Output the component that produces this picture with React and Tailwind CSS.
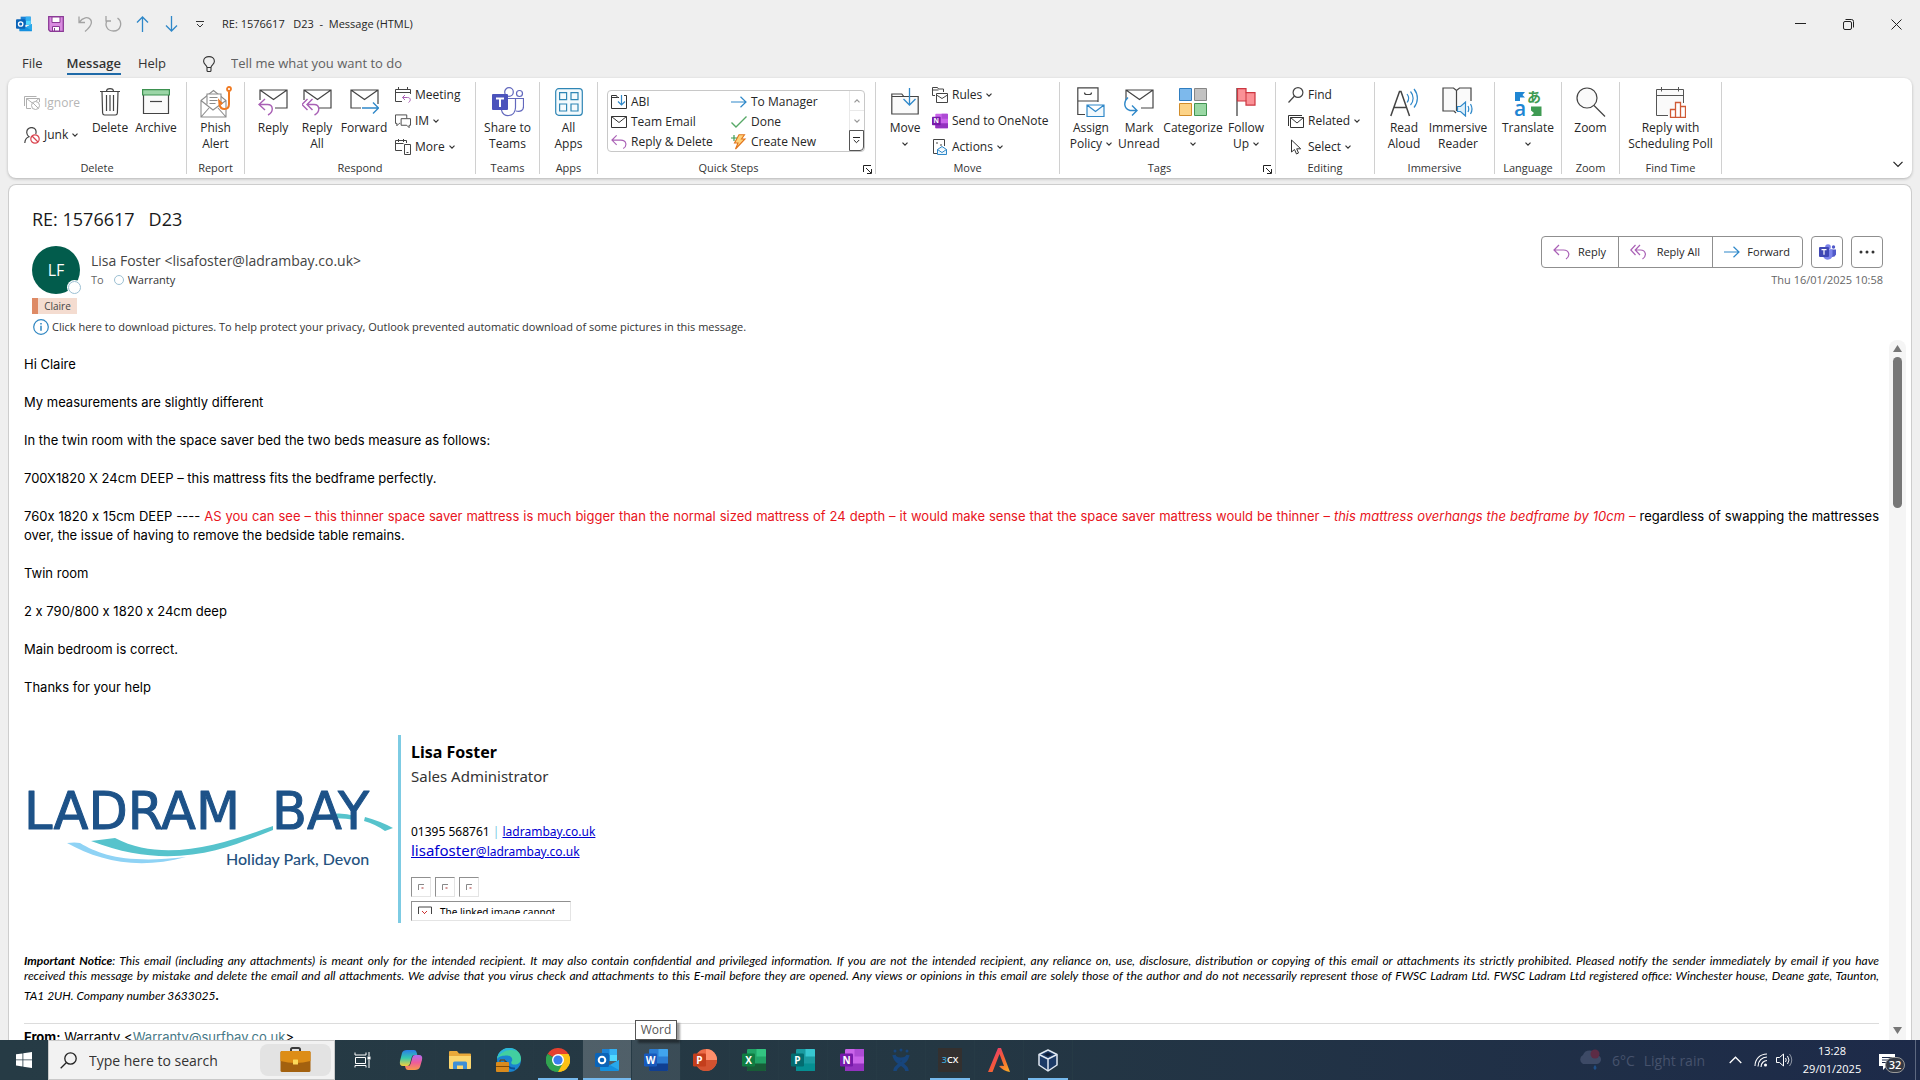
import React from 'react';

/* ---------- small shared pieces ---------- */

function Chevron() {
  return (
    <svg width="6" height="4" viewBox="0 0 6 4" className="inline-block shrink-0" fill="none" stroke="#333" strokeWidth="1.2">
      <path d="M.5 .6L3 3.1L5.5 .6" />
    </svg>
  );
}

function Group({ label, width, launcher, children }) {
  return (
    <section className={`relative my-1 flex h-[92px] shrink-0 flex-col justify-between border-r border-[#d0d0d0] ${width}`}>
      <div className="flex">{children}</div>
      <div className={`text-center text-[11px] leading-3 text-[#333] ${launcher ? 'pr-4' : ''}`}>{label}</div>
      {launcher && (
        <button aria-label={`${label} options`} className="absolute right-[3px] bottom-0">
          <svg width="9" height="9" viewBox="0 0 9 9" fill="none" stroke="#222">
            <path d="M.5 7V.5H8M3 3L8 8M8.5 4V8.5H4" />
          </svg>
        </button>
      )}
    </section>
  );
}

function BigButton({ icon, lines, width, arrow }) {
  return (
    <button className={`flex shrink-0 flex-col items-center pt-1 ${width}`}>
      <span className="flex h-8 items-center justify-center">{icon}</span>
      <span className="mt-0.5 text-center text-[12px] leading-4 whitespace-nowrap text-[#262626]">
        {lines.map((line, i) => (
          <span key={i} className="flex h-4 items-center justify-center gap-1">
            {line}
            {arrow && i === lines.length - 1 && <Chevron />}
          </span>
        ))}
      </span>
    </button>
  );
}

function SmallButton({ icon, label, arrow, disabled, height = 'h-[26px]' }) {
  return (
    <button
      disabled={disabled}
      className={`flex items-center gap-1 text-[12px] whitespace-nowrap ${height} ${disabled ? 'text-[#b5b5b5]' : 'text-[#262626]'}`}
    >
      <span className="flex w-4 justify-center">{icon}</span>
      {label}
      {arrow && <Chevron />}
    </button>
  );
}

/* ---------- icons ---------- */

function OutlookIcon({ size = 16 }) {
  return (
    <svg width={size} height={size} viewBox="0 0 24 24">
      <path d="M7 1h15v12H7z" fill="#1b83d8" />
      <path d="M14.500 1H22v6h-7.500z" fill="#35b1f2" />
      <path d="M14.500 7H22v6h-7.500z" fill="#50d9ff" />
      <path d="M7 7h7.500v6H7z" fill="#0a5fb4" />
      <path d="M5 12l10 5 9-5v10a1 1 0 0 1-1 1H6a1 1 0 0 1-1-1z" fill="#1490df" />
      <path d="M24 12v10l-9-5z" fill="#28a8ea" />
      <rect x="0" y="5" width="14" height="14" rx="1.500" fill="#0b64b8" />
      <circle cx="7" cy="12" r="3.300" fill="none" stroke="#fff" strokeWidth="2" />
    </svg>
  );
}

function SaveIcon() {
  return (
    <svg width="16" height="16" viewBox="0 0 16 16" stroke="#8b3a96" fill="#d98be0">
      <path d="M.7 .7h14.600v14.600H2.200L.7 13.800z" strokeWidth="1.300" />
      <path d="M4 1h8v5.500H4z" fill="#fff" />
      <path d="M4.500 15v-4.500h7V15z" fill="#fff" />
      <path d="M6.500 12v3" />
    </svg>
  );
}

function TrashIcon() {
  return (
    <svg width="22" height="28" viewBox="0 0 22 28" fill="none" stroke="#444" strokeWidth="1.200">
      <path d="M1 3.500h20M7.500 3.500C7.500 -.3 14.500 -.3 14.500 3.500M3 3.500l.6 21.500q.2 2 2 2h10.800q1.800 0 2-2L19 3.500M7.500 7v16M11 7v16M14.500 7v16" />
    </svg>
  );
}

function ArchiveIcon() {
  return (
    <svg width="28" height="26" viewBox="0 0 28 26">
      <path d="M1.500 6v18.500h25V6" fill="#fafafa" stroke="#444" strokeWidth="1.200" />
      <path d="M.6 .6h26.800v5.400H.6z" fill="#9bd5a6" stroke="#3d9150" strokeWidth="1.200" />
      <path d="M8 12.500h12" stroke="#444" strokeWidth="1.200" />
    </svg>
  );
}

function IgnoreIcon() {
  return (
    <svg width="16" height="14" viewBox="0 0 16 14" fill="none" stroke="#b0b0b0">
      <path d="M.5 10V.5h12M7 12.500H2.500v-10h13V6M2.500 2.500L9 7.500l6-5" />
      <circle cx="11.500" cy="9.500" r="4" fill="#fff" />
      <path d="M8.700 6.700l5.600 5.600" />
    </svg>
  );
}

function JunkIcon() {
  return (
    <svg width="16" height="17" viewBox="0 0 16 17" fill="none" stroke="#444">
      <path d="M.8 16C1 12 3 10.500 5 9.800C2.500 8 2 4 4 2c2-2 6-2 7.500.5c.7 1.500.8 3 .2 4.500" strokeWidth="1.200" />
      <circle cx="11" cy="12" r="4.200" fill="#fff" stroke="#d9434e" strokeWidth="1.200" />
      <path d="M8 9l6 6" stroke="#d9434e" strokeWidth="1.200" />
    </svg>
  );
}

function PhishIcon() {
  return (
    <svg width="32" height="32" viewBox="0 0 32 32" fill="none" stroke="#8c8c8c" strokeWidth="1.100">
      <path d="M1 14.500L13.500 4.500L26 14.500V31H1zM1 14.500L13 24L26 14.500M1 31l8-9M26 31l-8-9" />
      <path d="M7 18.500V8h14v10.500" fill="#fff" />
      <path d="M9.500 11.500h8M9.500 14.500h8M9.500 17.500h6" />
      <circle cx="29" cy="3" r="2" stroke="#f07a22" strokeWidth="1.800" />
      <path d="M29 5.500V18c0 6.500-8.500 6.500-9.500.5l-.3-3.500l3 3" stroke="#f07a22" strokeWidth="2" />
    </svg>
  );
}

function MailIcon({ kind }) {
  return (
    <svg width="30" height="28" viewBox="0 0 30 28" fill="none" stroke="#444" strokeWidth="1.200">
      <path d={kind === 'forward' ? 'M12 20H2V2h27v14M2 2l13.500 9.500L29 2' : 'M2 12V2h27v18H17M2 2l13.500 9.500L29 2'} />
      {kind === 'reply' && (
        <path d="M7 11L1 16.500L7 22M1 16.500h8.500c6 0 6.500 7.500.5 10.500" stroke="#a960b5" strokeWidth="1.400" />
      )}
      {kind === 'all' && (
        <path d="M5.500 11L0 16.500L5.500 22M10.500 11L5 16.500L10.500 22M5 16.500h7c6 0 6.500 7.500.5 10.500" stroke="#a960b5" strokeWidth="1.400" />
      )}
      {kind === 'forward' && (
        <path d="M13 20h16M24 14.500L29.500 20L24 25.500" stroke="#2f88c9" strokeWidth="1.400" />
      )}
      {kind === 'unread' && (
        <path d="M4 9.500C-1 14 0 21 6 22.500h6.500M8 17.500l5 5l-5 5" stroke="#2f88c9" strokeWidth="1.400" />
      )}
    </svg>
  );
}

function CurvedArrow({ double }) {
  return (
    <svg width="17" height="16" viewBox="0 0 17 16" fill="none" stroke="#a960b5" strokeWidth="1.200">
      {double ? (
        <path d="M5.500 1L.8 6L5.500 11M10 1L5.200 6L10 11M5.200 6h5.300c5.500 0 6.500 6 2 9" />
      ) : (
        <path d="M6 1L1 6L6 11M1 6h9.500c6 0 7 6 2.500 9" />
      )}
    </svg>
  );
}

function ArrowRight() {
  return (
    <svg width="16" height="12" viewBox="0 0 16 12" fill="none" stroke="#2f88c9" strokeWidth="1.200">
      <path d="M0 6h15M9.500 .8L15 6L9.500 11.200" />
    </svg>
  );
}

function MeetingIcon() {
  return (
    <svg width="16" height="16" viewBox="0 0 16 16" fill="none" stroke="#444">
      <path d="M7 14.500H.5v-12h15V7M.5 5.500h15M3.500 0v3M12.500 0v3" />
      <path d="M10 8L7.500 10.500L10 13M7.500 10.500h5c3.500 0 3.500 3.500 1 5" stroke="#a960b5" />
    </svg>
  );
}

function ImIcon() {
  return (
    <svg width="17" height="15" viewBox="0 0 17 15" fill="none" stroke="#444">
      <path d="M5.500 9.500h-1L2 12V9.500H.5v-9h12V4M6.500 4.500h10v7H15V14l-2.500-2.500h-6z" />
    </svg>
  );
}

function MoreIcon() {
  return (
    <svg width="16" height="16" viewBox="0 0 16 16" fill="none" stroke="#444">
      <path d="M7 11.500H.5v-10h11V4M.5 4.500h8M3.500 0v3M8.500 0v3M9.500 5.500h6v10h-6zM11.500 13.500h2" />
    </svg>
  );
}

function TeamsIcon() {
  return (
    <svg width="32" height="30" viewBox="0 0 32 30" fill="none" stroke="#6268bd" strokeWidth="1.200">
      <circle cx="17" cy="5" r="4.300" />
      <circle cx="27.500" cy="6.500" r="3" />
      <path d="M16 11.500h7.500v9c0 10-13 10.500-14 2.500M24 11.500h7.500v8c0 4-3 5.500-7.500 4.500" />
      <rect x="0" y="7" width="16" height="16" rx="1" fill="#4b53bc" stroke="none" />
      <path d="M4 11.500h8M8 11.500v8.500" stroke="#fff" strokeWidth="2" />
    </svg>
  );
}

function AppsIcon() {
  return (
    <svg width="28" height="28" viewBox="0 0 28 28" fill="#f4fafd" stroke="#2f86b5" strokeWidth="1.200">
      <rect x=".7" y=".7" width="26.600" height="26.600" rx="3" />
      <path d="M4.600 4.600h7v7h-7zM16 4.600h7v7h-7zM4.600 16h7v7h-7zM16 16h7v7h-7z" />
    </svg>
  );
}

function FolderArrow() {
  return (
    <svg width="28" height="28" viewBox="0 0 28 28" fill="none" stroke="#444" strokeWidth="1.200">
      <path d="M.8 6h10l2 2.500h14.400V26H.8zM.8 8.500h12" fill="#fafafa" />
      <path d="M18.500 0v17M12.500 11l6 6l6-6" stroke="#2f88c9" strokeWidth="1.300" />
    </svg>
  );
}

function SmallFolderArrow() {
  return (
    <svg width="16" height="14" viewBox="0 0 16 14" fill="none" stroke="#333">
      <path d="M8 2.500H6.500l-1-2H.5v13h15V.5H13M.5 2.500h6" />
      <path d="M10.500 0v9.500M7 6.500L10.500 10L14 6.500" stroke="#2f88c9" strokeWidth="1.200" />
    </svg>
  );
}

function SmallMail() {
  return (
    <svg width="16" height="12" viewBox="0 0 16 12" fill="none" stroke="#333">
      <path d="M.5 .5h15v11H.5zM.5 .5L8 6.500L15.500 .5" />
    </svg>
  );
}

function CheckIcon() {
  return (
    <svg width="16" height="12" viewBox="0 0 16 12" fill="none" stroke="#56a866" strokeWidth="1.400">
      <path d="M.5 6.500L5 11L15.500 .5" />
    </svg>
  );
}

function BoltIcon() {
  return (
    <svg width="16" height="16" viewBox="0 0 16 16" fill="none">
      <path d="M8 .7h5.500L10.500 5h3.500L4.500 15L7 9H3.500z" fill="#ffd27a" stroke="#e2751d" strokeWidth="1.100" />
      <path d="M0 4h6M3 1v6" stroke="#3f9b53" strokeWidth="1.200" />
    </svg>
  );
}

function RulesIcon() {
  return (
    <svg width="16" height="16" viewBox="0 0 16 16" fill="none" stroke="#444">
      <path d="M3 8.500H.5v-8h5l1 1.500h5v3M.5 3h6M4.500 6.500h11v9h-11zM4.500 8l5.500 3.500L15.500 8" />
    </svg>
  );
}

/* square office tile: coloured sheet behind a lettered badge */
function OfficeIcon({ letter, dark, colors, size = 24, round }) {
  return (
    <svg width={size} height={size} viewBox="0 0 24 24">
      {round ? (
        <>
          <circle cx="13" cy="12" r="11" fill={colors[0]} />
          <path d="M13 1a11 11 0 0 1 11 11H13z" fill={colors[1]} />
          <path d="M2 12h22a11 11 0 0 1-22 0z" fill={colors[2]} />
        </>
      ) : (
        <>
          <rect x="5" y="1" width="19" height="22" rx="1.200" fill={colors[0]} />
          <path d="M14.500 1H23q1 0 1 1v6.500h-9.500z" fill={colors[1]} />
          <path d="M5 15.500h19V22q0 1-1 1H6q-1 0-1-1z" fill={colors[2]} />
        </>
      )}
      <rect x="0" y="5.500" width="13" height="13" rx="1.200" fill={dark} />
      <text x="6.500" y="15.500" textAnchor="middle" fontSize="10" fontWeight="700" fill="#fff" fontFamily="Open Sans, sans-serif">
        {letter}
      </text>
    </svg>
  );
}

function ActionsIcon() {
  return (
    <svg width="14" height="16" viewBox="0 0 14 16" fill="none" stroke="#444">
      <path d="M4 14.500H.5V.5h11V7M3 4h2M7 6h2" />
      <path d="M4.500 10.500l4.500-3l4.500 3v5h-9zM4.500 10.500l4.500 3l4.500-3" fill="#e8f4fb" stroke="#2f88c9" />
    </svg>
  );
}

function PolicyIcon() {
  return (
    <svg width="28" height="30" viewBox="0 0 28 30" fill="none" stroke="#444" strokeWidth="1.200">
      <path d="M8 27.500H.8V.8H21V15M.8 14H21M7.500 5.500q0 2 2 2h3q2 0 2-2" />
      <path d="M10 18h17v11.500H10zM10 18l8.500 6.500L27 18" fill="#f2f9fd" stroke="#2f88c9" />
    </svg>
  );
}

function CategorizeIcon() {
  return (
    <svg width="28" height="28" viewBox="0 0 28 28">
      <path d="M.5 .5h12v12H.5z" fill="#7db9ec" stroke="#2f7dc0" />
      <path d="M15.500 .5h12v12h-12z" fill="#c2c2c2" stroke="#868686" />
      <path d="M.5 15.500h12v12H.5z" fill="#fcd387" stroke="#d08c2a" />
      <path d="M15.500 15.500h12v12h-12z" fill="#9ad8a4" stroke="#419452" />
    </svg>
  );
}

function FlagIcon() {
  return (
    <svg width="20" height="28" viewBox="0 0 20 28">
      <path d="M1 0v28" stroke="#444" strokeWidth="1.300" />
      <path d="M1.500 .6H10v4h9v12.500h-9V13H1.500z" fill="#fb9196" stroke="#cc3640" strokeWidth="1.200" />
      <path d="M10 4.500V13" stroke="#cc3640" />
    </svg>
  );
}

function FindIcon() {
  return (
    <svg width="16" height="16" viewBox="0 0 16 16" fill="none" stroke="#444" strokeWidth="1.200">
      <circle cx="10" cy="5.500" r="4.900" />
      <path d="M6.500 9L.5 15.500" />
    </svg>
  );
}

function RelatedIcon() {
  return (
    <svg width="16" height="13" viewBox="0 0 16 13" fill="none" stroke="#333">
      <path d="M.5 11V.5H14M2.500 2.500h13v10h-13zM2.500 2.500L9 8l6.500-5.500" />
    </svg>
  );
}

function SelectIcon() {
  return (
    <svg width="12" height="16" viewBox="0 0 12 16" fill="none" stroke="#333">
      <path d="M1.500 1v12l3-2.500L6.500 15l2-1L6.700 9.800h4z" />
    </svg>
  );
}

function ReadAloudIcon() {
  return (
    <svg width="28" height="29" viewBox="0 0 28 29" fill="none" stroke="#444" strokeWidth="1.500">
      <path d="M.8 28L9.500 3.500h1.500L19.500 28M4 19.500h12.500" />
      <path d="M17 6c2 2.500 2 6 0 8.500M20.500 3.500c3.500 4 3.500 9.500 0 13.500M24 1c4.500 5.500 4.500 13 0 18.500" stroke="#2f88c9" strokeWidth="1.200" />
    </svg>
  );
}

function ReaderIcon() {
  return (
    <svg width="32" height="30" viewBox="0 0 32 30" fill="none" stroke="#444" strokeWidth="1.200">
      <path d="M14 26l-2-2H1V1h10.500l3 2.500l3-2.500H29v13M14.500 3.500V24" fill="#fafafa" />
      <path d="M15.500 19.500h3l5-4.500v14l-5-4.500h-3zM26 19q1.500 3 0 6M28.500 17q3 5 0 10" fill="#dff0fa" stroke="#2f88c9" />
    </svg>
  );
}

function TranslateIcon() {
  return (
    <svg width="28" height="29" viewBox="0 0 28 29">
      <path d="M1 4h10L8.500 7l2.500 2.500H6V13H1z" fill="#1f86d3" />
      <path d="M17 18.500h10.500V28H17l3-3l-3-2.500z" fill="#3f9b53" />
      <text x="0" y="28" fontSize="21" fontWeight="600" fill="#1f86d3" fontFamily="Open Sans, sans-serif">a</text>
      <text x="13" y="14" fontSize="14" fontWeight="700" fill="#3f9b53" fontFamily="Noto Sans CJK JP, sans-serif">あ</text>
    </svg>
  );
}

function ZoomIcon() {
  return (
    <svg width="30" height="30" viewBox="0 0 30 30" fill="none" stroke="#444" strokeWidth="1.200">
      <circle cx="11" cy="11" r="10" fill="#fafafa" />
      <path d="M18 18.500L29 29.500" />
    </svg>
  );
}

function PollIcon() {
  return (
    <svg width="30" height="31" viewBox="0 0 30 31" fill="none" stroke="#555">
      <path d="M12 28.500H.5v-26h27V16M.5 8.500h27M5.500 0v4.500M22.500 0v4.500" fill="#fafafa" />
      <path d="M14.500 30.500v-8h5v8zM19.500 30.500v-15h5v15zM24.500 30.500v-11h5v11z" fill="#fff" stroke="#cf5a35" strokeWidth="1.300" />
    </svg>
  );
}

/* ---------- window chrome ---------- */

function TitleBar() {
  return (
    <header className="flex h-12 shrink-0 items-center">
      <div className="flex flex-1 items-center pl-4">
        <OutlookIcon />
        <button aria-label="Save" className="ml-4"><SaveIcon /></button>
        <button aria-label="Undo" className="ml-[14px]">
          <svg width="15" height="16" viewBox="0 0 15 16" fill="none" stroke="#a3a3a3" strokeWidth="1.300">
            <path d="M1 .5v6h6M1 6.500C5 1 10 .5 12.500 3.500c2.500 3.500.5 7-5.500 12" />
          </svg>
        </button>
        <button aria-label="Redo" className="ml-3">
          <svg width="17" height="16" viewBox="0 0 17 16" fill="none" stroke="#a3a3a3" strokeWidth="1.300">
            <path d="M1 0v5h5M2 5C-.5 9 2 15 8.500 15C16 15 18 6 12.500 2" />
          </svg>
        </button>
        <button aria-label="Previous item" className="ml-[14px]">
          <svg width="13" height="16" viewBox="0 0 13 16" fill="none" stroke="#2f88c9" strokeWidth="1.300">
            <path d="M6.500 16V1M1 6.500L6.500 1L12 6.500" />
          </svg>
        </button>
        <button aria-label="Next item" className="ml-4">
          <svg width="13" height="16" viewBox="0 0 13 16" fill="none" stroke="#2f88c9" strokeWidth="1.300">
            <path d="M6.500 0v15M1 9.500L6.500 15L12 9.500" />
          </svg>
        </button>
        <button aria-label="Customize toolbar" className="ml-[18px]">
          <svg width="8" height="7" viewBox="0 0 8 7" fill="none" stroke="#333">
            <path d="M0 .5h8M1 3l3 3l3-3" />
          </svg>
        </button>
        <h1 className="ml-[18px] text-[11px] whitespace-pre text-[#262626]">RE: 1576617   D23  -  Message (HTML)</h1>
      </div>
      <button aria-label="Minimize" className="flex h-full w-12 items-center justify-center">
        <svg width="11" height="2"><path d="M0 .5h11" stroke="#222" /></svg>
      </button>
      <button aria-label="Restore" className="flex h-full w-12 items-center justify-center">
        <svg width="11" height="11" viewBox="0 0 11 11" fill="none" stroke="#222">
          <rect x=".5" y="2.500" width="8" height="8" rx="1.500" />
          <path d="M2.500 .5h6q2 0 2 2v6" />
        </svg>
      </button>
      <button aria-label="Close" className="flex h-full w-12 items-center justify-center">
        <svg width="11" height="11" viewBox="0 0 11 11" stroke="#222"><path d="M.5 .5l10 10M10.500 .5l-10 10" /></svg>
      </button>
    </header>
  );
}

function Tabs() {
  return (
    <nav className="flex h-[30px] shrink-0 items-start pl-[22px] text-[13px] leading-5 text-[#333]">
      <a href="#file" className="mt-[5px]">File</a>
      <a href="#message" className="mt-[5px] ml-6 border-b-2 border-[#1f6aa8] font-semibold">Message</a>
      <a href="#help" className="mt-[5px] ml-[17px]">Help</a>
      <label htmlFor="tell-me" className="mt-2 ml-[37px]" aria-label="Tell me what you want to do">
        <svg width="12" height="16" viewBox="0 0 12 16" fill="none" stroke="#333" strokeWidth="1.100">
          <path d="M4 11.500C4 9 .6 8.500 .6 5.300C.6 -1 11.400 -1 11.400 5.300C11.400 8.500 8 9 8 11.500zM4 11.500v3q0 1 1 1h2q1 0 1-1v-3" />
        </svg>
      </label>
      <input id="tell-me" placeholder="Tell me what you want to do" className="mt-[5px] ml-4 w-64 bg-transparent outline-none placeholder:text-[#616161]" />
    </nav>
  );
}

const quickSteps = [
  [<SmallFolderArrow />, 'ABI'],
  [<ArrowRight />, 'To Manager'],
  [<SmallMail />, 'Team Email'],
  [<CheckIcon />, 'Done'],
  [<CurvedArrow />, 'Reply & Delete'],
  [<BoltIcon />, 'Create New'],
];

function Ribbon() {
  return (
    <div className="mx-2 flex h-[100px] shrink-0 rounded-lg bg-white shadow-[0_1px_3px_rgba(0,0,0,0.25)]">
      <Group label="Delete" width="w-[179px]">
        <div className="mt-[5px] w-[84px] pl-4">
          <SmallButton height="h-8" disabled icon={<IgnoreIcon />} label="Ignore" />
          <SmallButton height="h-8" icon={<JunkIcon />} label="Junk" arrow />
        </div>
        <BigButton width="w-9" icon={<TrashIcon />} lines={['Delete']} />
        <BigButton width="w-14" icon={<ArchiveIcon />} lines={['Archive']} />
      </Group>
      <Group label="Report" width="w-[58px]">
        <BigButton width="w-full" icon={<PhishIcon />} lines={['Phish', 'Alert']} />
      </Group>
      <Group label="Respond" width="w-[231px]">
        <BigButton width="ml-[6px] w-[44px]" icon={<MailIcon kind="reply" />} lines={['Reply']} />
        <BigButton width="w-[44px]" icon={<MailIcon kind="all" />} lines={['Reply', 'All']} />
        <BigButton width="w-[50px]" icon={<MailIcon kind="forward" />} lines={['Forward']} />
        <div className="pl-[6px]">
          <SmallButton icon={<MeetingIcon />} label="Meeting" />
          <SmallButton icon={<ImIcon />} label="IM" arrow />
          <SmallButton icon={<MoreIcon />} label="More" arrow />
        </div>
      </Group>
      <Group label="Teams" width="w-16">
        <BigButton width="w-full" icon={<TeamsIcon />} lines={['Share to', 'Teams']} />
      </Group>
      <Group label="Apps" width="w-[58px]">
        <BigButton width="w-full" icon={<AppsIcon />} lines={['All', 'Apps']} />
      </Group>
      <Group label="Quick Steps" width="w-[278px]" launcher>
        <div className="mt-2 ml-[9px] flex h-[62px] w-[258px] rounded border border-[#c8c8c8]">
          <div className="grid flex-1 grid-cols-[120px_1fr] grid-rows-3 pl-[3px]">
            {quickSteps.map(([icon, label]) => (
              <SmallButton key={label} height="h-[21px]" icon={icon} label={label} />
            ))}
          </div>
          <div className="flex w-[15px] flex-col">
            <button aria-label="Scroll up" className="flex flex-1 items-center justify-center border-b border-l border-[#d4d4d4] opacity-50"><span className="flex rotate-180"><Chevron /></span></button>
            <button aria-label="Scroll down" className="flex flex-1 items-center justify-center border-l border-[#d4d4d4] opacity-50"><Chevron /></button>
            <button aria-label="All quick steps" className="flex flex-1 items-center justify-center rounded-br border border-[#555]">
              <svg width="7" height="7" viewBox="0 0 7 7" fill="none" stroke="#222"><path d="M0 .5h7M.8 3l2.700 2.700L6.200 3" /></svg>
            </button>
          </div>
        </div>
      </Group>
      <Group label="Move" width="w-[184px]">
        <BigButton width="ml-1 w-[50px]" icon={<FolderArrow />} lines={['Move', '']} arrow />
        <div className="pl-[2px]">
          <SmallButton icon={<RulesIcon />} label="Rules" arrow />
          <SmallButton icon={<OfficeIcon size={16} letter="N" dark="#7719aa" colors={['#ca64ea', '#ae4bd5', '#9332bf']} />} label="Send to OneNote" />
          <SmallButton icon={<ActionsIcon />} label="Actions" arrow />
        </div>
      </Group>
      <Group label="Tags" width="w-[216px]" launcher>
        <BigButton width="ml-[7px] w-12" icon={<PolicyIcon />} lines={['Assign', 'Policy']} arrow />
        <BigButton width="w-12" icon={<MailIcon kind="unread" />} lines={['Mark', 'Unread']} />
        <BigButton width="w-[60px]" icon={<CategorizeIcon />} lines={['Categorize', '']} arrow />
        <BigButton width="w-[46px]" icon={<FlagIcon />} lines={['Follow', 'Up']} arrow />
      </Group>
      <Group label="Editing" width="w-[99px]">
        <div className="pl-3">
          <SmallButton icon={<FindIcon />} label="Find" />
          <SmallButton icon={<RelatedIcon />} label="Related" arrow />
          <SmallButton icon={<SelectIcon />} label="Select" arrow />
        </div>
      </Group>
      <Group label="Immersive" width="w-[120px]">
        <BigButton width="ml-1 w-[50px]" icon={<ReadAloudIcon />} lines={['Read', 'Aloud']} />
        <BigButton width="w-[58px]" icon={<ReaderIcon />} lines={['Immersive', 'Reader']} />
      </Group>
      <Group label="Language" width="w-[67px]">
        <BigButton width="w-full" icon={<TranslateIcon />} lines={['Translate', '']} arrow />
      </Group>
      <Group label="Zoom" width="w-[58px]">
        <BigButton width="w-full" icon={<ZoomIcon />} lines={['Zoom']} />
      </Group>
      <Group label="Find Time" width="w-[102px]">
        <BigButton width="w-full" icon={<PollIcon />} lines={['Reply with', 'Scheduling Poll']} />
      </Group>
      <button aria-label="Collapse ribbon" className="mr-[9px] mb-[10px] ml-auto self-end">
        <svg width="10" height="7" viewBox="0 0 10 7" fill="none" stroke="#222" strokeWidth="1.200"><path d="M.5 .8L5 5.300L9.500 .8" /></svg>
      </button>
    </div>
  );
}

/* ---------- message ---------- */

function MessageHeader() {
  return (
    <div className="shrink-0 pt-5 pr-7 pl-[23px]">
      <h2 className="h-7 text-[18px] leading-7 whitespace-pre text-[#1a1a1a]">RE: 1576617   D23</h2>
      <div className="mt-[3px] flex items-start">
        <div className="relative mt-[10px] flex size-12 items-center justify-center rounded-full bg-[#025c4c] text-[16px] text-white">
          LF
          <span className="absolute -right-px bottom-0 size-[13px] rounded-full border border-[#9cc0d3] bg-white ring-1 ring-white" />
        </div>
        <div className="mt-[15px] ml-[11px]">
          <div className="text-[14px] leading-5 text-[#444]">Lisa Foster &lt;lisafoster@ladrambay.co.uk&gt;</div>
          <div className="flex h-[18px] items-center text-[11px] text-[#333]">
            <span className="text-[#666]">To</span>
            <span className="mr-1 ml-[10px] size-[10px] rounded-full border border-[#9cc0d3]" />
            Warranty
          </div>
        </div>
        <div className="ml-auto">
          <div className="flex h-8 gap-2 text-[11px] text-[#262626]">
            <div className="flex rounded border border-[#8f8f8f]">
              <button className="flex w-[77px] items-center justify-between border-r border-[#8f8f8f] pr-3 pl-[11px]"><CurvedArrow />Reply</button>
              <button className="flex w-[94px] items-center justify-between border-r border-[#8f8f8f] pr-3 pl-[11px]"><CurvedArrow double />Reply All</button>
              <button className="flex w-[89px] items-center justify-between pr-3 pl-[11px]"><ArrowRight />Forward</button>
            </div>
            <button aria-label="Share to Teams" className="flex w-8 items-center justify-center rounded border border-[#8f8f8f]">
              <svg width="17" height="16" viewBox="0 0 17 16">
                <circle cx="14.500" cy="3" r="1.700" fill="#5059c9" />
                <circle cx="9" cy="3" r="2.800" fill="#7b83eb" />
                <path d="M11 5.500h6v5q-1 3-5 2.500z" fill="#5059c9" />
                <path d="M4 5.500h9.500V11c0 6-8.500 6-9.500 1z" fill="#7b83eb" />
                <rect y="3" width="10" height="10" rx="1" fill="#4048b5" />
                <path d="M2.500 5.700h5M5 5.700v5" stroke="#fff" strokeWidth="1.200" />
              </svg>
            </button>
            <button aria-label="More actions" className="flex w-8 items-center justify-center rounded border border-[#8f8f8f]">
              <svg width="16" height="4" viewBox="0 0 16 4" fill="#333"><circle cx="2" cy="2" r="1.500" /><circle cx="8" cy="2" r="1.500" /><circle cx="14" cy="2" r="1.500" /></svg>
            </button>
          </div>
          <div className="mt-0.5 text-right text-[11px] leading-5 text-[#666]">Thu 16/01/2025 10:58</div>
        </div>
      </div>
      <div className="mt-1 flex h-4 w-[45px] items-center justify-center border-l-[6px] border-[#de8a65] bg-[#f4dcd0] text-[10px] text-[#444]">Claire</div>
      <button className="mt-1 flex h-[18px] items-center gap-[3px] text-[11px] text-[#333]">
        <svg width="17" height="16" viewBox="0 0 17 16" fill="none" stroke="#2f86c1" strokeWidth="1.200">
          <circle cx="9" cy="8" r="7.300" />
          <path d="M9 6.800v5M9 4v1.500" strokeWidth="1.500" />
        </svg>
        Click here to download pictures. To help protect your privacy, Outlook prevented automatic download of some pictures in this message.
      </button>
    </div>
  );
}

function LadramLogo() {
  return (
    <svg width="374" height="100" viewBox="0 0 374 100" className="shrink-0" fontFamily="Lato, sans-serif">
      <path d="M43 62q8-1 13 0c20 12 47 21 106 14c-48 13-87 4-119-14z" fill="#8fd3f5" />
      <path d="M67 60l24-3c50 26 110 5 158-12v4C205 66 150 92 67 60z" fill="#56c3cc" />
      <path d="M291 37q22-8 40-2v4q-20-4-42 1z" fill="#56c3cc" />
      <path d="M341 36q15 4 28 11l-8 3q-10-7-21-10z" fill="#56c3cc" />
      <g fontSize="51" fill="#1d5288" stroke="#1d5288" strokeLinejoin="round" fontFamily="DejaVu Sans, sans-serif">
        <text x="0" y="48">LADRAM</text>
        <text x="248" y="48">BAY</text>
      </g>
      <text x="202" y="84" fontSize="16" fill="#24527f" fontWeight="500">Holiday Park, Devon</text>
    </svg>
  );
}

function Placeholder() {
  return (
    <span className="flex size-5 items-center justify-center border border-t-[#909090] border-r-[#e4e4e4] border-b-[#e4e4e4] border-l-[#909090]">
      <svg width="6" height="6" viewBox="0 0 6 6"><path d="M.5 6V.5H6" fill="none" stroke="#888" /><path d="M3.500 4h2" stroke="#a33" /></svg>
    </span>
  );
}

function Signature() {
  return (
    <div className="mt-[38px] flex h-[188px] font-['Noto_Sans',sans-serif]">
      <div className="flex w-[374px] items-center pt-1"><LadramLogo /></div>
      <div className="border-l-[3px] border-[#7dcbe3] pt-[5px] pl-[10px] text-black">
        <div className="text-[16px] leading-6 font-bold">Lisa Foster</div>
        <div className="text-[15px] leading-6 text-[#333]">Sales Administrator</div>
        <div className="mt-[34px] text-[12px] leading-[19px]">
          01395 568761 <span className="text-[#7dcbe3]">|</span>{' '}
          <a href="#site" className="text-[#0000d0] underline">ladrambay.co.uk</a>
        </div>
        <div className="text-[12px] leading-[19px]">
          <a href="#mail" className="text-[#0000d0] underline"><span className="text-[15px]">lisafoster</span>@ladrambay.co.uk</a>
        </div>
        <div className="mt-4 flex gap-1">
          <Placeholder />
          <Placeholder />
          <Placeholder />
        </div>
        <div className="mt-1 flex h-5 w-[160px] border border-t-[#909090] border-r-[#e4e4e4] border-b-[#e4e4e4] border-l-[#909090] px-[6px] pt-1">
          <div className="flex h-2 gap-2 overflow-hidden text-[10px] leading-3 whitespace-nowrap">
            <svg width="14" height="14" viewBox="0 0 14 14" fill="none" className="shrink-0"><path d="M.5 14V1h13v13" stroke="#444" /><path d="M4 5l5 5M9 5l-5 5" stroke="#c33" /></svg>
            The linked image cannot
          </div>
        </div>
      </div>
    </div>
  );
}

function MessageBody() {
  return (
    <article className="min-w-0 flex-1 overflow-hidden pt-[15px] pr-[10px] pl-[15px] font-['Inter',sans-serif] text-[13px] leading-[19px] text-black [font-feature-settings:'calt'_0]">
      <div className="space-y-[19px]">
        <p>Hi Claire</p>
        <p>My measurements are slightly different</p>
        <p>In the twin room with the space saver bed the two beds measure as follows:</p>
        <p>700X1820 X 24cm DEEP – this mattress fits the bedframe perfectly.</p>
        <p className="text-justify">
          760x 1820 x 15cm DEEP ----{' '}
          <span className="text-[#e8141c]">
            AS you can see – this thinner space saver mattress is much bigger than the normal sized mattress of 24 depth – it would make
            sense that the space saver mattress would be thinner – <i>this mattress overhangs the bedframe by 10cm –</i>
          </span>{' '}
          regardless of swapping the mattresses over, the issue of having to remove the bedside table remains.
        </p>
        <p>Twin room</p>
        <p>2 x 790/800 x 1820 x 24cm deep</p>
        <p>Main bedroom is correct.</p>
        <p>Thanks for your help</p>
      </div>
      <Signature />
      <p className="mt-[30px] font-['Lato',sans-serif] text-[12px] leading-[15px] italic">
        <span className="block text-justify [text-align-last:justify]">
          <b>Important Notice</b>: This email (including any attachments) is meant only for the intended recipient. It may also contain
          confidential and privileged information. If you are not the intended recipient, any reliance on, use, disclosure, distribution
          or copying of this email or attachments its strictly prohibited. Pleased notify the sender immediately by email if you have
        </span>
        <span className="block text-justify [text-align-last:justify]">
          received this message by mistake and delete the email and all attachments. We advise that you virus check and attachments to
          this E-mail before they are opened. Any views or opinions in this email are solely those of the author and do not necessarily
          represent those of FWSC Ladram Ltd. FWSC Ladram Ltd registered office: Winchester house, Deane gate, Taunton,
        </span>
        TA1 2UH. Company number 3633025
        <b className="inline-block text-[13px] leading-6 not-italic">.</b>
      </p>
      <hr className="mt-4 border-[#dcdcdc]" />
      <p className="pt-1 whitespace-nowrap">
        <b>From:</b> Warranty &lt;<a href="#warranty" className="text-[#467886] underline">Warranty@surfbay.co.uk</a>&gt;
      </p>
    </article>
  );
}

function Scrollbar() {
  return (
    <div className="mr-[5px] flex w-[17px] flex-col items-center rounded-t-lg bg-[#f5f5f5] pt-[5px] pb-[6px]" aria-hidden="true">
      <svg width="9" height="7" viewBox="0 0 9 7" fill="#777"><path d="M4.500 0L9 7H0z" /></svg>
      <div className="mt-[5px] h-[151px] w-[9px] rounded-full bg-[#777]" />
      <svg width="9" height="7" viewBox="0 0 9 7" fill="#777" className="mt-auto"><path d="M4.500 7L9 0H0z" /></svg>
    </div>
  );
}

/* ---------- taskbar ---------- */

function TaskViewIcon() {
  return (
    <svg width="17" height="16" viewBox="0 0 17 16" fill="none" stroke="#fff">
      <path d="M1 .5v2.500h11V.5M1.500 5.500h10v6h-10zM1 15.500v-2h11v2M15 0v4M15 8v8" />
      <path d="M13.500 4.500h3v3h-3z" fill="#fff" stroke="none" />
    </svg>
  );
}

function CopilotIcon() {
  return (
    <svg width="24" height="24" viewBox="0 0 24 24">
      <defs>
        <linearGradient id="cpA" x1="0" y1="0" x2="0" y2="1">
          <stop offset="0" stopColor="#2a7de8" /><stop offset=".5" stopColor="#35c9b0" /><stop offset="1" stopColor="#f5d13c" />
        </linearGradient>
        <linearGradient id="cpB" x1="0" y1="0" x2="0" y2="1">
          <stop offset="0" stopColor="#b06bf0" /><stop offset=".5" stopColor="#ee5c9b" /><stop offset="1" stopColor="#f79a4b" />
        </linearGradient>
      </defs>
      <path d="M8 2h7q2 0 2.500 2l.8 3h-3q-2 0-2.500 2l-2 7q-.6 2-2.500 2H4q-4 0-3-5l2-8q1-3 5-3z" fill="url(#cpA)" />
      <path d="M16 22H9q-2 0-2.500-2L6 18h3q2 0 2.500-2l2-7q.6-2 2.500-2h4q4 0 3 5l-2 7q-1 3-5 3z" fill="url(#cpB)" />
    </svg>
  );
}

function ExplorerIcon() {
  return (
    <svg width="24" height="24" viewBox="0 0 24 24">
      <path d="M1 4q0-1 1-1h7l2 2.500h11q1 0 1 1V20H1z" fill="#e9a93a" />
      <path d="M1 8h22v12q0 1-1 1H2q-1 0-1-1z" fill="#fbd66f" />
      <path d="M5 21v-6q0-1.500 1.500-1.500h11q1.500 0 1.500 1.500v6h-4v-3.500H9V21z" fill="#3f8fd6" />
    </svg>
  );
}

function EdgeIcon() {
  return (
    <svg width="26" height="26" viewBox="0 0 26 26">
      <circle cx="13" cy="13" r="12" fill="#1a84cf" />
      <path d="M1 12C2 5 7 1 13 1c7 0 12 5 12 10.500c0 4-3 6-6.500 6s-4-2-2.500-3.500c1-2.500-1-5.500-5-5.500C7 8.500 3 9 1 12z" fill="#42cfa0" />
      <path d="M1 12C2 5 7 1 13 1c3 0 6 1 8 3c-9-3-17 1-20 8z" fill="#2bb5dd" />
      <path d="M10 14c0 5 4 8 9 7.500" stroke="#0b4f97" strokeWidth="2" fill="none" />
      <rect x="0" y="15" width="13" height="10" rx="1" fill="#d98a1c" />
      <path d="M0 19.500h13" stroke="#7d4705" />
      <path d="M4 15v-2h5v2" fill="none" stroke="#6b3c05" />
    </svg>
  );
}

function ChromeIcon() {
  return (
    <svg width="24" height="24" viewBox="0 0 24 24">
      <path d="M12 12L1.600 6A12 12 0 0 1 22.400 6z" fill="#e5402f" />
      <path d="M12 12L22.400 6A12 12 0 0 1 12 24z" fill="#fbc116" />
      <path d="M12 12V24A12 12 0 0 1 1.600 6z" fill="#31a350" />
      <path d="M12 6h10.400A12 12 0 0 1 12 24l5.200-9z" fill="#fbc116" />
      <path d="M6.800 15L1.600 6A12 12 0 0 0 12 24l5-9z" fill="#31a350" />
      <circle cx="12" cy="12" r="6" fill="#fff" />
      <circle cx="12" cy="12" r="4.600" fill="#3b7ded" />
    </svg>
  );
}

function FigureIcon() {
  return (
    <svg width="20" height="24" viewBox="0 0 20 24" fill="none" stroke="#17457c">
      <path d="M3 7c1 6 13 5 14 0M4 23c0-7 12-8 12-14M16 23c0-7-12-8-12-14" strokeWidth="3.500" />
      <circle cx="10" cy="2" r="1.500" fill="#17457c" stroke="none" />
      <circle cx="4" cy="3" r="1.500" fill="#17457c" stroke="none" />
      <circle cx="16" cy="3" r="1.500" fill="#17457c" stroke="none" />
    </svg>
  );
}

function ThreeCxIcon() {
  return (
    <span className="flex size-6 items-center justify-center bg-[#33302f] text-[9px] font-semibold text-white">
      <span className="text-[#3aa0cf]">3</span>CX
    </span>
  );
}

function ArrowAIcon() {
  return (
    <svg width="22" height="24" viewBox="0 0 22 24">
      <defs>
        <linearGradient id="aGrad" x1="0" y1="0" x2="1" y2="1">
          <stop offset="0" stopColor="#e5308a" /><stop offset=".5" stopColor="#f4583a" /><stop offset="1" stopColor="#fbb022" />
        </linearGradient>
      </defs>
      <path d="M10 0h3l9 24q-7-1-11-6q3-.5 5 0L11.500 6L4.500 24H0z" fill="url(#aGrad)" />
    </svg>
  );
}

function CubeIcon() {
  return (
    <svg width="20" height="23" viewBox="0 0 20 23" stroke="#dfe7f2" strokeWidth="1.500" strokeLinejoin="round">
      <path d="M10 1l9 4.500v10.500L10 22L1 16V5.500z" fill="#1c3a66" />
      <path d="M1 5.500L10 10l9-4.500M10 10v12" fill="none" />
      <path d="M6 5.500l4-2l4 2l-4 2z" fill="#0e1c36" stroke="none" />
    </svg>
  );
}

const apps = [
  { name: 'Task View', icon: <TaskViewIcon /> },
  { name: 'Copilot', icon: <CopilotIcon /> },
  { name: 'File Explorer', icon: <ExplorerIcon /> },
  { name: 'Edge', icon: <EdgeIcon /> },
  { name: 'Chrome', icon: <ChromeIcon />, open: true },
  { name: 'Outlook', icon: <OutlookIcon size={24} />, active: true },
  { name: 'Word', icon: <OfficeIcon letter="W" dark="#185abd" colors={['#2b7cd3', '#41a5ee', '#103f91']} />, tooltip: true },
  { name: 'PowerPoint', icon: <OfficeIcon round letter="P" dark="#c43e1c" colors={['#ed6c47', '#ff8f6b', '#d35230']} /> },
  { name: 'Excel', icon: <OfficeIcon letter="X" dark="#107c41" colors={['#21a366', '#33c481', '#185c37']} /> },
  { name: 'Publisher', icon: <OfficeIcon letter="P" dark="#036c70" colors={['#1a9ba1', '#37c6d0', '#058f92']} /> },
  { name: 'OneNote', icon: <OfficeIcon letter="N" dark="#7719aa" colors={['#ca64ea', '#ae4bd5', '#9332bf']} /> },
  { name: 'Assistant', icon: <FigureIcon /> },
  { name: '3CX', icon: <ThreeCxIcon />, open: true },
  { name: 'Launcher', icon: <ArrowAIcon /> },
  { name: 'VirtualBox', icon: <CubeIcon />, open: true },
];

function TaskbarApp({ app }) {
  let bg = '';
  if (app.active) bg = 'bg-white/20';
  if (app.tooltip) bg = 'bg-white/10';
  return (
    <button aria-label={app.name} className={`relative flex w-[49px] items-center justify-center border-r border-[#263a45] ${bg}`}>
      {app.icon}
      {app.open && <span className="absolute inset-x-1 bottom-0 h-0.5 bg-[#76b9ed]" />}
      {app.active && <span className="absolute inset-x-0 bottom-0 h-0.5 bg-[#76b9ed]" />}
      {app.tooltip && (
        <span role="tooltip" className="absolute bottom-10 left-[3px] flex h-5 w-[42px] items-center justify-center border border-[#555] bg-white text-[12px] text-[#555] shadow-[3px_3px_2px_rgba(0,0,0,0.4)]">
          Word
        </span>
      )}
    </button>
  );
}

function Taskbar() {
  return (
    <footer className="flex h-10 shrink-0 bg-linear-to-r from-[#263b45] via-[#243743] to-[#1d2a49] text-white">
      <button aria-label="Start" className="flex w-12 items-center justify-center">
        <svg width="16" height="16" viewBox="0 0 16 16" fill="#fff"><path d="M0 2.300l6.500-.9v6.100H0zM7.300 1.300L16 0v7.500H7.300zM0 8.300h6.500v6.200L0 13.600zM7.300 8.300H16V16l-8.700-1.300z" /></svg>
      </button>
      <div className="mr-[3px] flex w-[287px] items-center border border-[#c9c9c9] bg-[#f2f2f2] pr-[3px] pl-[11px]">
        <svg width="17" height="17" viewBox="0 0 17 17" fill="none" stroke="#222" strokeWidth="1.300"><circle cx="10.500" cy="6.500" r="5.700" /><path d="M6.500 10.500L.7 16.300" /></svg>
        <input aria-label="Search" placeholder="Type here to search" className="ml-3 w-0 flex-1 bg-transparent text-[14px] outline-none placeholder:text-[#333]" />
        <span className="flex h-8 w-[71px] items-center justify-center rounded-lg bg-[#e3e3e3]">
          <svg width="31" height="26" viewBox="0 0 31 26">
            <path d="M11 5V2.500Q11 1 12.500 1h6Q20 1 20 2.500V5" fill="none" stroke="#3a3a3a" strokeWidth="2" />
            <rect x=".5" y="4" width="30" height="21" rx="1.500" fill="#a3610f" />
            <path d="M.5 5.500Q.5 4 2 4h27q1.500 0 1.500 1.500V14q-15 4-30 0z" fill="#dd8d16" />
            <rect x="13" y="12.500" width="5" height="5" rx=".5" fill="#fbd95b" />
          </svg>
        </span>
      </div>
      {apps.map((app) => <TaskbarApp key={app.name} app={app} />)}
      <div className="ml-auto flex items-center text-[11px]">
        <button className="mr-6 flex items-center gap-[9px] text-[14px] text-[#46526c]">
          <svg width="25" height="22" viewBox="0 0 25 22">
            <path d="M5 15a5 5 0 0 1 0-9a7 7 0 0 1 13 0a4.500 4.500 0 0 1 1 9z" fill="#3d4a66" />
            <circle cx="17" cy="5" r="4.500" fill="#5c2c45" />
            <path d="M17 16q3 3 0 5q-3-2 0-5z" fill="#1f4f87" />
          </svg>
          <span>6°C</span>
          <span>Light rain</span>
        </button>
        <button aria-label="Show hidden icons">
          <svg width="13" height="8" viewBox="0 0 13 8" fill="none" stroke="#fff" strokeWidth="1.300"><path d="M.7 7L6.500 1.200L12.300 7" /></svg>
        </button>
        <button aria-label="Network" className="ml-3">
          <svg width="14" height="14" viewBox="0 0 14 14" fill="none" stroke="#fff" strokeWidth="1.100">
            <path d="M1 13C1 6 6 1 13 1M4 13.500C4 8 8 4 13 4M7 14c0-4 3-6.500 6-6.500" />
            <circle cx="11.500" cy="12" r="1.500" fill="#fff" stroke="none" />
          </svg>
        </button>
        <button aria-label="Volume" className="ml-2">
          <svg width="17" height="14" viewBox="0 0 17 14" fill="none" stroke="#fff">
            <path d="M.5 4.500h3L7.500 1v12l-4-3.500h-3zM9.500 5q1.500 2 0 4M11.500 3q3 4 0 8" />
            <path d="M13.500 1q4.500 6 0 12" opacity=".5" />
          </svg>
        </button>
        <div className="ml-[8px] w-[62px] text-center leading-[18px]">
          <div>13:28</div>
          <div>29/01/2025</div>
        </div>
        <button aria-label="Notifications" className="relative mr-3 ml-4 h-6 w-6">
          <svg width="16" height="16" viewBox="0 0 16 16" className="mt-1"><path d="M0 0h16v12H8l-4 4v-4H0z" fill="#fff" /><path d="M3 3.500h10M3 6h10M3 8.500h6" stroke="#1d2a49" /></svg>
          <span className="absolute top-[9px] left-[6px] flex h-4 w-5 items-center justify-center rounded-full border border-[#999] bg-[#333844] text-[11px] font-semibold">32</span>
        </button>
        <span className="h-10 w-[5px] border-l border-[#5d6880]" />
      </div>
    </footer>
  );
}

export default function App() {
  return (
    <div className="flex h-screen flex-col overflow-hidden bg-[#efefef] font-['Open_Sans',sans-serif]">
      <TitleBar />
      <Tabs />
      <Ribbon />
      <main className="mx-2 mt-[6px] flex min-h-0 flex-1 flex-col rounded-t-lg border border-b-0 border-[#cdcdcd] bg-white">
        <MessageHeader />
        <div className="mt-1 flex min-h-0 flex-1">
          <MessageBody />
          <Scrollbar />
        </div>
      </main>
      <Taskbar />
    </div>
  );
}
